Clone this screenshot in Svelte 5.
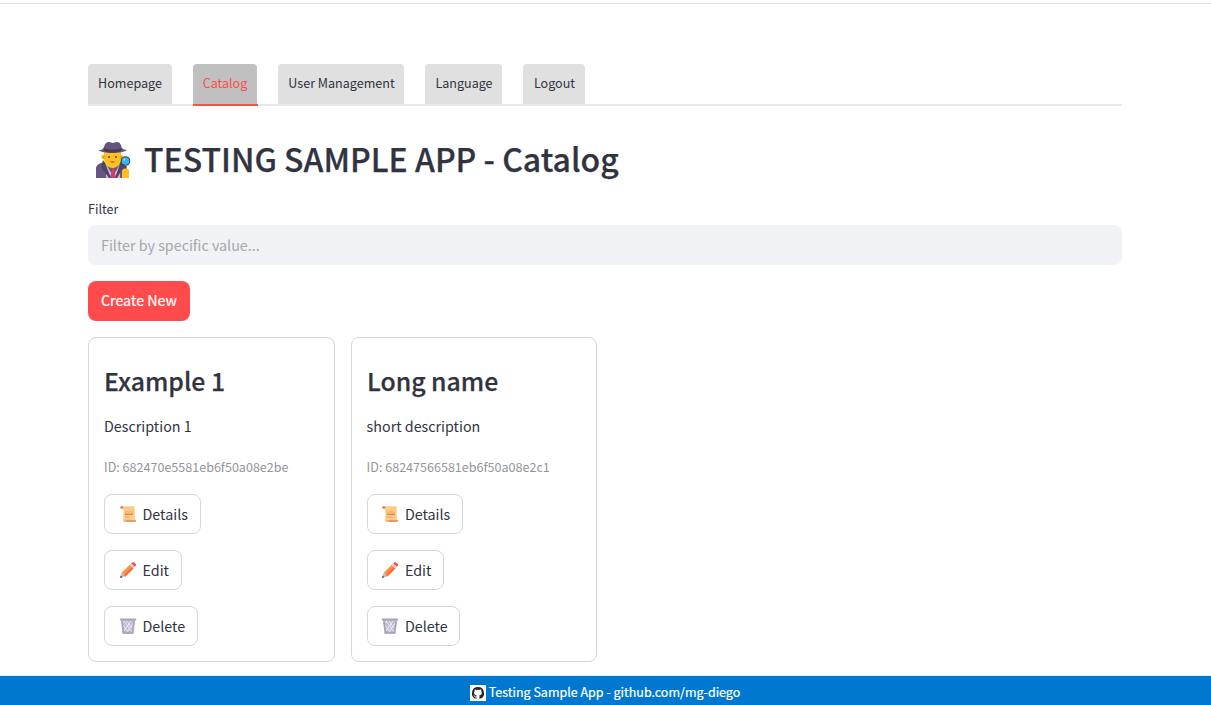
<script>
  const tabs = [
    { label: 'Homepage', width: 84 },
    { label: 'Catalog', width: 64, active: true },
    { label: 'User Management', width: 126 },
    { label: 'Language', width: 77 },
    { label: 'Logout', width: 62 }
  ];
  const items = [
    { name: 'Example 1', description: 'Description 1', id: '682470e5581eb6f50a08e2be' },
    { name: 'Long name', description: 'short description', id: '68247566581eb6f50a08e2c1' }
  ];
</script>

{#snippet scroll()}
  <svg class="icon" viewBox="0 0 18 18">
    <path d="M3 1.200h11.200c1 0 1.500.6 1.500 1.500v12H4.400V4.500H2.300C.7 4.500.8 1.200 3 1.200z" fill="#fdcb84" />
    <path d="M1.200 3c0-1.200.6-1.800 1.700-1.800 1.100 0 1.500.8 1.500 2H2.800z" fill="#df7555" />
    <path d="M7 14.700h9.400c1 0 .9 2.300-.6 2.300H6.200c-1.400 0-1.800-.9-1.800-2.300z" fill="#e99a62" />
    <path d="M4.400 13.500c.2 1.800 1 2.200 2.600 2v1.400h-.8c-1.400 0-1.800-1-1.800-2z" fill="#fdcb84" />
    <path d="M6 9.300h8" stroke="#d98255" stroke-width="1.300" fill="none" />
    <path d="M6 7h8M6 12h5" stroke="#f0a771" stroke-width="1" fill="none" />
  </svg>
{/snippet}

{#snippet pencil()}
  <svg class="icon" viewBox="0 0 18 18">
    <path d="M1 17l1.700-5.300 3.600 3.600z" fill="#d7b4ac" />
    <path d="M1 17l.8-2.500 1.700 1.700z" fill="#5d3b60" />
    <path d="M2.700 11.700l8-8 3.700 3.700-8 8z" fill="#ff9147" />
    <path d="M5 13.900l8-8 1.400 1.500-8 8z" fill="#f56b3d" />
    <path d="M10.700 3.700l1.700-1.700 3.700 3.700-1.700 1.700z" fill="#d8cce0" />
    <path d="M12.200 2.200l.8-.8c.7-.7 1.500-.7 2.200 0l1.400 1.400c.7.700.7 1.500 0 2.200l-.8.800z" fill="#f7554f" />
  </svg>
{/snippet}

{#snippet bin()}
  <svg class="icon" viewBox="0 0 18 18">
    <path d="M1.800 3h14.400l-1.700 13.500H3.500z" fill="#c1bbcf" />
    <path d="M5 4l8 11M8 4l5 7M12 4l-7 10M15 5l-7 10M4 8l6 8M3 7l3-3M13 15l1-3" stroke="#f0edf6" stroke-width=".9" />
    <path d="M3 4l1.500 11.500M15 4l-1.500 11.500" stroke="#a6a0b7" stroke-width="1.300" />
    <path d="M3.400 14.700h11.200l-.3 2H3.700z" fill="#aaa4ba" />
    <rect x=".8" y="1.400" width="16.400" height="2.200" rx=".8" fill="#aaa4ba" />
  </svg>
{/snippet}

<div class="topline"></div>
<main>
  <nav>
    {#each tabs as tab}
      <button class="tab" class:active={tab.active} style:width="{tab.width}px">{tab.label}</button>
    {/each}
  </nav>

  <h1>
    <svg class="detective" viewBox="0 0 36 38">
      <path d="M1 37V27c0-3 4-5 8-6h16c3 1 6 4 6 7v9z" fill="#655780" />
      <path d="M11 23l7 12 7-12v14H11z" fill="#c9b9df" />
      <path d="M16 25h4l-1 3 2 9h-6l2-9z" fill="#d83d60" />
      <path d="M8 19l-2 7 8 11h2L10 22zM24 19l6 5-8 13h-2l5-14z" fill="#504466" />
      <path d="M9 10h17v8c0 5-4 9-8.500 9S9 23 9 18z" fill="#ffc21d" />
      <circle cx="8.500" cy="16" r="2" fill="#f5a900" />
      <circle cx="26" cy="16" r="2" fill="#f5a900" />
      <path d="M14 15v2M21 15v2" stroke="#5d3442" stroke-width="1.500" />
      <path d="M15 20.500q2.500 2.500 5 0z" fill="#b93f45" />
      <path d="M3 9c3 1 5-1 6-3 1-4 3-5 5-5 2 0 2 1 3.500 1S20 1 22 1c3 0 4 3 5 6 1 1 3 2 5 2-4 4-25 4-29 0z" fill="#625579" />
      <path d="M9 7c4 2 13 2 17 0v3c-5 2-12 2-17 0z" fill="#473b5c" />
      <path d="M30.500 25v5" stroke="#423b50" stroke-width="2.200" />
      <circle cx="30.500" cy="20" r="4.800" fill="#343b5a" />
      <circle cx="30.500" cy="20" r="3.800" fill="#35b5f4" />
      <circle cx="29.300" cy="18.600" r="1.100" fill="#9be3ff" />
      <path d="M27 30c0-2 3-3 5-2 2 0 2 2 2 3v6h-7z" fill="#ffbd20" />
    </svg>
    <span>TESTING SAMPLE APP - Catalog</span>
  </h1>

  <label for="filter">Filter</label>
  <input id="filter" placeholder="Filter by specific value..." />
  <button class="create">Create New</button>

  <section class="cards">
    {#each items as item}
      <article>
        <h2>{item.name}</h2>
        <p>{item.description}</p>
        <small>ID: {item.id}</small>
        <div class="actions">
          <button class="action details">{@render scroll()}<span>Details</span></button>
          <button class="action edit">{@render pencil()}<span>Edit</span></button>
          <button class="action delete">{@render bin()}<span>Delete</span></button>
        </div>
      </article>
    {/each}
  </section>
</main>
<footer>
  <svg viewBox="0 0 16 16">
    <rect width="16" height="16" fill="#fff" />
    <path d="M8 2.100a6 6 0 0 0-1.900 11.700c.3.100.4-.1.400-.3v-1.200c-1.700.4-2.100-.7-2.100-.7-.3-.7-.7-.9-.7-.9-.5-.4 0-.4 0-.4.600 0 .9.600.9.600.600.900 1.400.700 1.800.500 0-.4.200-.7.400-.800-1.300-.2-2.700-.7-2.700-3 0-.7.200-1.200.6-1.600-.1-.2-.3-.8.100-1.600 0 0 .5-.2 1.600.600A6 6 0 0 1 8 4.800c.5 0 1 .1 1.500.2 1.100-.8 1.600-.6 1.600-.6.400.800.200 1.400.100 1.600.4.400.6.900.6 1.600 0 2.300-1.400 2.800-2.700 3 .2.200.4.500.4 1.100v1.800c0 .2.100.4.400.3A6 6 0 0 0 8 2.100z" fill="#24262b" />
  </svg>
  <span>Testing Sample App - github.com/mg-diego</span>
</footer>

<style>
  :global(body) { margin: 0; background: #fff; overflow: hidden; }
  :global(#app) { height: 705px; display: flex; flex-direction: column; color: #31333f; font-family: "Noto Sans CJK SC", sans-serif; }
  * { box-sizing: border-box; }
  button, input { font-family: inherit; color: inherit; margin: 0; border: 0; }
  .topline { height: 1px; margin-top: 3px; background: #e2e2e2; flex: none; }
  main { padding: 60px 89px 0 88px; flex: 1; display: flex; flex-direction: column; align-items: flex-start; }
  nav { display: flex; gap: 21px; width: 100%; height: 42px; border-bottom: 2px solid #e8e8e9; }
  .tab { height: 40px; padding: 0 0 2px; background: #e0e0e0; border-radius: 4px 4px 0 0; font-size: 12.55px; line-height: 36px; white-space: nowrap; }
  .tab:nth-child(n + 3) { padding-left: 1px; }
  .active { color: #ff4b4b; background: #c0c0c0; }
  .active::after { content: ""; display: block; width: 65px; height: 2px; margin-top: 3px; background: #ff4b4b; }
  .tab.active { height: 42px; padding: 1px 0 0; line-height: 36px; }
  h1 { margin: 33px 0 0 7px; height: 42px; display: flex; align-items: center; gap: 13px; font-size: 32px; line-height: 38px; font-weight: 500; white-space: nowrap; -webkit-text-stroke: .25px #31333f; }
  h1 span { height: 42px; }
  .detective { width: 36px; height: 38px; flex: none; }
  label { margin-top: 18px; height: 20px; font-size: 12.55px; line-height: 20px; }
  input { width: 100%; height: 40px; margin-top: 6px; padding: 0 13px 2px; background: #f0f2f6; border-radius: 8px; font-size: 14.300px; }
  input::placeholder { color: #a5a7ae; opacity: 1; }
  .create { width: 102px; height: 40px; margin-top: 16px; padding: 0 0 3px; background: #ff4b4b; color: #fff; border-radius: 8px; font-size: 14.300px; line-height: 20px; white-space: nowrap; -webkit-text-stroke: .2px #fff; }
  .cards { display: flex; gap: 16px; margin-top: 16px; }
  article { width: 247px; height: 325px; padding: 25px 15px 15px; border: 1px solid #d5d6d8; border-radius: 8px; display: flex; flex-direction: column; align-items: flex-start; }
  article + article { width: 246px; }
  h2 { margin: 0; font-size: 24.800px; line-height: 34px; font-weight: 500; -webkit-text-stroke: .25px #31333f; }
  p { margin: 17px 0 0; font-size: 14.300px; line-height: 24px; }
  small { margin-top: 19px; color: #94959b; font-size: 12.550px; line-height: 20px; }
  article + article small, article + article p { margin-left: -.4px; }
  .actions { display: flex; flex-direction: column; gap: 16px; margin-top: 17px; }
  .action { height: 40px; padding: 0 0 0 14px; display: flex; align-items: center; gap: 5.500px; background: #fff; border: 1px solid #d5d6d8; border-radius: 8px; font-size: 14.300px; line-height: 20px; }
  .action span { padding-bottom: 1px; }
  .details { width: 97px; }
  .edit { width: 78px; }
  .delete { width: 94px; }
  article + article .details { width: 96px; }
  article + article .edit { width: 77px; }
  article + article .delete { width: 93px; }
  article + article .action { padding-left: 13.400px; }
  .icon { width: 18px; height: 18px; flex: none; }
  footer { height: 30px; flex: none; border-top: 1px solid #d7f0f5; background: #0078d0; color: #fff; display: flex; justify-content: center; align-items: center; gap: 3px; font-size: 12.500px; padding: 4px 1px 0 0; -webkit-text-stroke: .2px #fff; }
  footer span { line-height: 18px; padding-bottom: 2px; }
  footer svg { width: 16px; height: 16px; }
</style>
